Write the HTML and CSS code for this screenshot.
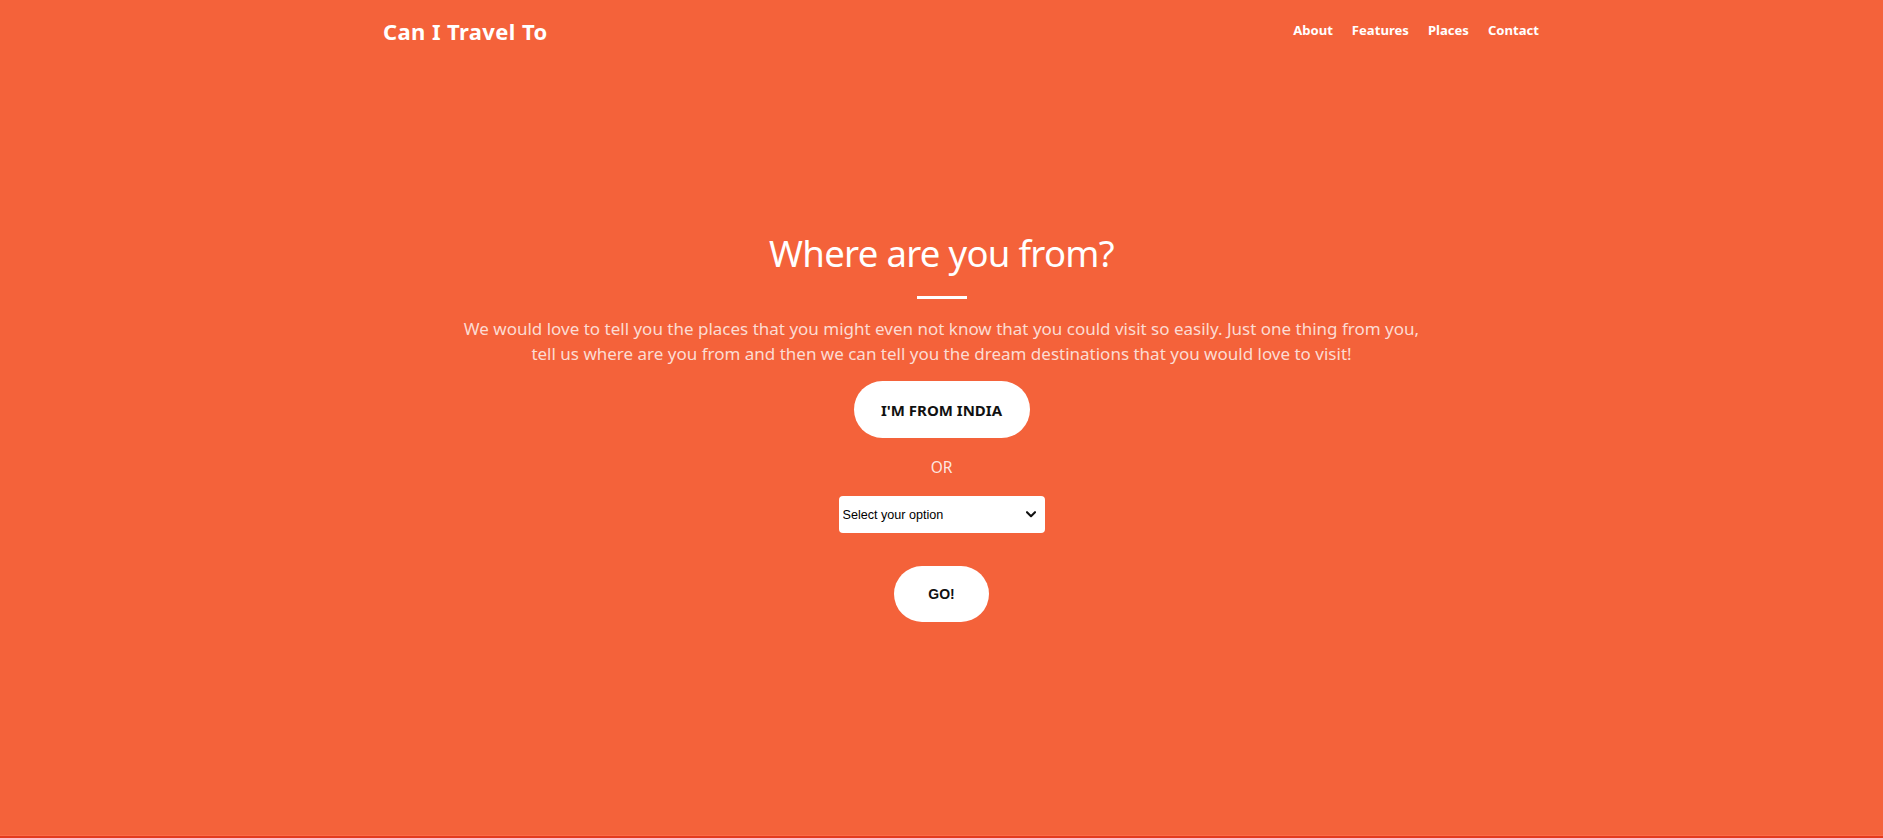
FILE: index.html
```html
<!DOCTYPE html>
<html lang="en">
<head>
<meta charset="utf-8">
<title>Can I Travel To</title>
<link rel="stylesheet" href="styles.css">
</head>
<body>
<div class="page">
  <header class="topbar">
    <a class="brand" href="#">Can I Travel To</a>
    <ul class="links">
      <li><a href="#">About</a></li>
      <li><a href="#">Features</a></li>
      <li><a href="#">Places</a></li>
      <li><a href="#">Contact</a></li>
    </ul>
  </header>
  <main class="hero">
    <h1 class="title">Where are you from?</h1>
    <hr class="divider">
    <p class="lead">We would love to tell you the places that you might even not know that you could visit so easily. Just one thing from you,<br>tell us where are you from and then we can tell you the dream destinations that you would love to visit!</p>
    <button class="pill pill-india" type="button">I'M FROM INDIA</button>
    <div class="or">OR</div>
    <div class="picker">
      <select class="picker-select">
        <option>Select your option</option>
      </select>
      <svg class="picker-arrow" width="10" height="7" viewBox="0 0 10 7"><path d="M1 1.2 L5 5.2 L9 1.2" fill="none" stroke="#111" stroke-width="2.1" stroke-linecap="round" stroke-linejoin="round"/></svg>
    </div>
    <button class="pill pill-go" type="button">GO!</button>
  </main>
  <footer class="edge"></footer>
</div>
</body>
</html>
```

FILE: styles.css
```css
* { box-sizing: border-box; }
html, body { margin: 0; padding: 0; }
body {
  background: #f4623a;
  font-family: "Noto Sans", "Open Sans", sans-serif;
  color: #fff;
}
.page {
  min-height: 100vh;
  display: flex;
  flex-direction: column;
}
.topbar {
  display: flex;
  justify-content: space-between;
  align-items: flex-start;
  padding: 17px 344px 0 383px;
}
.brand {
  margin-top: -1px;
  font-size: 22px;
  font-weight: 700;
  line-height: 30px;
  letter-spacing: 0.4px;
  color: #fff;
  text-decoration: none;
}
.links {
  list-style: none;
  margin: 0;
  padding: 0;
  display: flex;
  gap: 19px;
}
.links a {
  font-size: 13.1px;
  font-weight: 700;
  line-height: 26px;
  color: #fff;
  text-decoration: none;
}
.hero {
  flex: 1;
  display: flex;
  flex-direction: column;
  align-items: center;
  padding-top: 185px;
}
.title {
  margin: 0;
  font-size: 36.5px;
  font-weight: 400;
  line-height: 45.6px;
  letter-spacing: -0.7px;
}
.divider {
  width: 50px;
  height: 3px;
  border: 0;
  background: #fff;
  margin: 19px 0 0;
}
.lead {
  margin: 17px 0 0;
  font-size: 17px;
  line-height: 25px;
  text-align: center;
  color: rgba(255, 255, 255, 0.78);
}
.pill {
  border: 0;
  background: #fff;
  color: #111;
  border-radius: 30px;
  display: inline-flex;
  align-items: center;
  justify-content: center;
  cursor: pointer;
}
.pill-india {
  margin-top: 15.5px;
  width: 176px;
  height: 57px;
  font-family: "Noto Sans", sans-serif;
  font-size: 15px;
  font-weight: 700;
}
.or {
  margin-top: 17px;
  font-size: 15.5px;
  line-height: 24px;
  color: rgba(255, 255, 255, 0.85);
}
.picker {
  position: relative;
  margin-top: 17px;
  width: 206px;
  height: 37px;
}
.picker-select {
  appearance: none;
  -webkit-appearance: none;
  width: 100%;
  height: 100%;
  border: 0;
  border-radius: 4px;
  background: #fff;
  padding: 0 0 0 4px;
  font-family: "Liberation Sans", Arial, sans-serif;
  font-size: 12.6px;
  color: #000;
}
.picker-arrow {
  position: absolute;
  right: 9px;
  top: 15px;
  pointer-events: none;
}
.pill-go {
  margin-top: 33px;
  width: 95px;
  height: 56px;
  font-family: "Liberation Sans", Arial, sans-serif;
  font-size: 14px;
  font-weight: 700;
}
.edge {
  height: 3px;
  border-top: 1px solid #fd6b46;
  background: #e33a1f;
}
```
